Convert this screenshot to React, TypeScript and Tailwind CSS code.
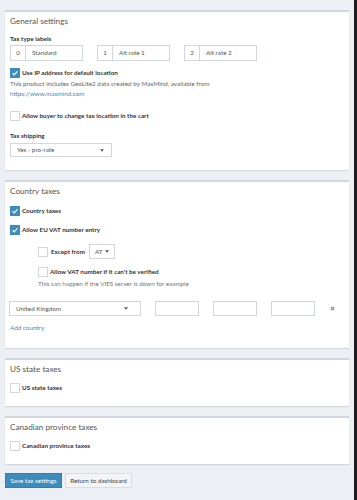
import React from 'react';

const Check = ({ checked }: { checked?: boolean }) =>
    checked ? (
        <span className="flex h-[10px] w-[10px] shrink-0 items-center justify-center bg-[#3c8dbc]">
            <svg viewBox="0 0 10 10" className="h-[8px] w-[8px]">
                <path d="M2 5.3l2 2 4-4.4" fill="none" stroke="#fff" strokeWidth="1.5" />
            </svg>
        </span>
    ) : (
        <span className="h-[10px] w-[10px] shrink-0 border border-[#d2d6de] bg-white" />
    );

const CheckRow = ({ checked, label }: { checked?: boolean; label: string }) => (
    <div className="flex items-center gap-[2px]">
        <Check checked={checked} />
        <span className="text-[6.3px] font-bold leading-[10px] text-[#333]">{label}</span>
    </div>
);

const Caret = () => (
    <svg viewBox="0 0 6 4" className="h-[3px] w-[4px]">
        <path d="M0 0h6L3 4z" fill="#555" />
    </svg>
);

const Box = ({ title, children }: { title: string; children: React.ReactNode }) => (
    <div className="border-t-2 border-[#d2d6de] bg-white px-[5px] shadow-[0_1px_1px_rgba(0,0,0,0.1)]">
        <div className="pt-[4px] text-[8.2px] leading-[10px] text-[#555]">{title}</div>
        {children}
    </div>
);

const LabelInput = ({ n, value }: { n: string; value: string }) => (
    <div className="flex h-[16px] w-[73px] border border-[#d2d6de] text-[6.3px] text-[#555]">
        <span className="flex w-[15px] items-center justify-center border-r border-[#d2d6de]">{n}</span>
        <span className="flex items-center pl-[6px]">{value}</span>
    </div>
);

export default function App() {
    return (
        <div className="flex h-[500px] w-[357px] overflow-hidden font-['Lato',sans-serif]">
            <div className="flex flex-1 flex-col bg-[#ecf0f5] px-[5px] pt-[10px]">
                {/* General settings */}
                <Box title="General settings">
                    <div className="mt-[8px] text-[6.3px] font-bold leading-[9px] text-[#333]">Tax type labels</div>
                    <div className="mt-[2px] flex gap-[14px]">
                        <LabelInput n="0" value="Standard" />
                        <LabelInput n="1" value="Alt rate 1" />
                        <LabelInput n="2" value="Alt rate 2" />
                    </div>
                    <div className="mt-[7px]">
                        <CheckRow checked label="Use IP address for default location" />
                    </div>
                    <p className="mt-[1px] text-[6.3px] leading-[10px] text-[#666]">
                        This product includes GeoLite2 data created by MaxMind, available from
                        <br />
                        <span className="text-[#3c8dbc]">https://www.maxmind.com</span>
                    </p>
                    <div className="mt-[12px]">
                        <CheckRow label="Allow buyer to change tax location in the cart" />
                    </div>
                    <div className="mt-[10px] text-[6.3px] font-bold leading-[9px] text-[#333]">Tax shipping</div>
                    <div className="mt-[3px] flex h-[14px] w-[102px] items-center justify-between border border-[#d2d6de] pl-[6px] pr-[7px] text-[6.3px] text-[#555]">
                        <span>Yes - pro-rate</span>
                        <Caret />
                    </div>
                    <div className="h-[13px]" />
                </Box>

                {/* Country taxes */}
                <div className="mt-[10px]">
                    <Box title="Country taxes">
                        <div className="mt-[10px]">
                            <CheckRow checked label="Country taxes" />
                        </div>
                        <div className="mt-[9px]">
                            <CheckRow checked label="Allow EU VAT number entry" />
                        </div>
                        <div className="ml-[28px] mt-[9px] flex items-center">
                            <Check />
                            <span className="ml-[3px] text-[6.3px] font-bold text-[#333]">Except from</span>
                            <div className="ml-[4px] flex h-[15px] w-[26px] items-center gap-[3px] border border-[#d2d6de] pl-[5px] text-[6.3px] text-[#555]">
                                <span>AT</span>
                                <Caret />
                            </div>
                        </div>
                        <div className="ml-[28px] mt-[8px]">
                            <CheckRow label="Allow VAT number if it can't be verified" />
                        </div>
                        <p className="ml-[28px] mt-[2px] text-[6.3px] leading-[10px] text-[#777]">
                            This can happen if the VIES server is down for example
                        </p>
                        <div className="-ml-[1px] mt-[12px] flex items-center">
                            <div className="flex h-[15px] w-[132px] items-center justify-between border border-[#d2d6de] pl-[6px] pr-[12px] text-[6.3px] text-[#555]">
                                <span>United Kingdom</span>
                                <Caret />
                            </div>
                            <div className="ml-[14px] h-[15px] w-[44px] border border-[#d2d6de]" />
                            <div className="ml-[14px] h-[15px] w-[44px] border border-[#d2d6de]" />
                            <div className="ml-[14px] h-[15px] w-[44px] border border-[#d2d6de]" />
                            <svg viewBox="0 0 6 6" className="ml-[15px] h-[5px] w-[5px]">
                                <path d="M1 1l4 4M5 1L1 5" stroke="#888" strokeWidth="1.4" />
                            </svg>
                        </div>
                        <div className="mt-[7px] text-[6.3px] leading-[10px] text-[#3c8dbc]">Add country</div>
                        <div className="h-[15px]" />
                    </Box>
                </div>

                {/* US state taxes */}
                <div className="mt-[10px]">
                    <Box title="US state taxes">
                        <div className="mt-[9px]">
                            <CheckRow label="US state taxes" />
                        </div>
                        <div className="h-[13px]" />
                    </Box>
                </div>

                {/* Canadian */}
                <div className="mt-[10px]">
                    <Box title="Canadian province taxes">
                        <div className="mt-[9px]">
                            <CheckRow label="Canadian province taxes" />
                        </div>
                        <div className="h-[13px]" />
                    </Box>
                </div>

                <div className="mt-[9px] flex gap-[3px]">
                    <button className="flex h-[15px] w-[57px] items-center justify-center border border-[#367fa9] bg-[#3c8dbc] text-[6.3px] text-white">
                        Save tax settings
                    </button>
                    <button className="flex h-[15px] w-[67px] items-center justify-center border border-[#ddd] bg-[#f4f4f4] text-[6.3px] text-[#444]">
                        Return to dashboard
                    </button>
                </div>
            </div>
            <div className="w-[3px] bg-[#1c1c1c]" />
        </div>
    );
}
